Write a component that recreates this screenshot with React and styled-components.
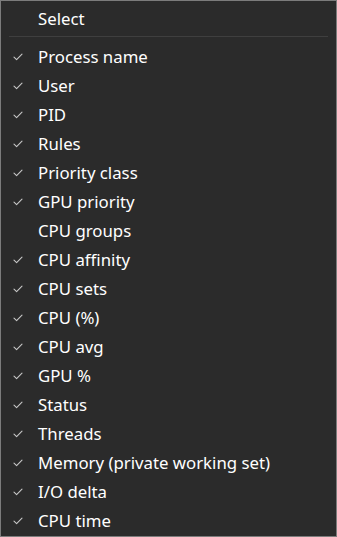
import React from "react";
import styled, { createGlobalStyle } from "styled-components";

const Global = createGlobalStyle`
  html, body { margin: 0; padding: 0; background: #2b2b2b; }
  body { font-family: "Noto Sans", "Open Sans", sans-serif; }
`;

const Menu = styled.div`
  box-sizing: border-box;
  width: 337px;
  height: 537px;
  background: #2b2b2b;
  border: 1px solid #7c7c7c;
  padding-top: 4px;
  display: flex;
  flex-direction: column;
  overflow: hidden;
`;

const Header = styled.div`
  height: 29px;
  display: flex;
  align-items: center;
  padding-left: 37px;
  color: #ffffff;
  font-size: 16.8px;
  line-height: 29px;
`;

const Separator = styled.div`
  height: 1px;
  margin: 2px 8px 6px 8px;
  background: #3f3f3f;
`;

const Row = styled.div`
  height: 29px;
  display: flex;
  align-items: center;
  color: #ffffff;
  font-size: 16.8px;
  line-height: 29px;
  white-space: nowrap;
`;

const CheckSlot = styled.div`
  width: 37px;
  flex: none;
  display: flex;
  align-items: center;
  padding-left: 12px;
  padding-bottom: 2px;
  box-sizing: border-box;
`;

const Label = styled.span`
  position: relative;
  top: -1px;
`;

const Check = () => (
  <svg width="10" height="8" viewBox="0 0 10 8" fill="none">
    <path d="M1 4.2 L3.6 6.6 L9 1.2" stroke="#c8c8c8" strokeWidth="1.1" strokeLinecap="round" strokeLinejoin="round" />
  </svg>
);

const items = [
  ["Process name", true],
  ["User", true],
  ["PID", true],
  ["Rules", true],
  ["Priority class", true],
  ["GPU priority", true],
  ["CPU groups", false],
  ["CPU affinity", true],
  ["CPU sets", true],
  ["CPU (%)", true],
  ["CPU avg", true],
  ["GPU %", true],
  ["Status", true],
  ["Threads", true],
  ["Memory (private working set)", true],
  ["I/O delta", true],
  ["CPU time", true],
];

export default function App() {
  return (
    <>
      <Global />
      <Menu>
        <Header><Label>Select</Label></Header>
        <Separator />
        {items.map(([label, checked]) => (
          <Row key={label}>
            <CheckSlot>{checked && <Check />}</CheckSlot>
            <Label>{label}</Label>
          </Row>
        ))}
      </Menu>
    </>
  );
}
